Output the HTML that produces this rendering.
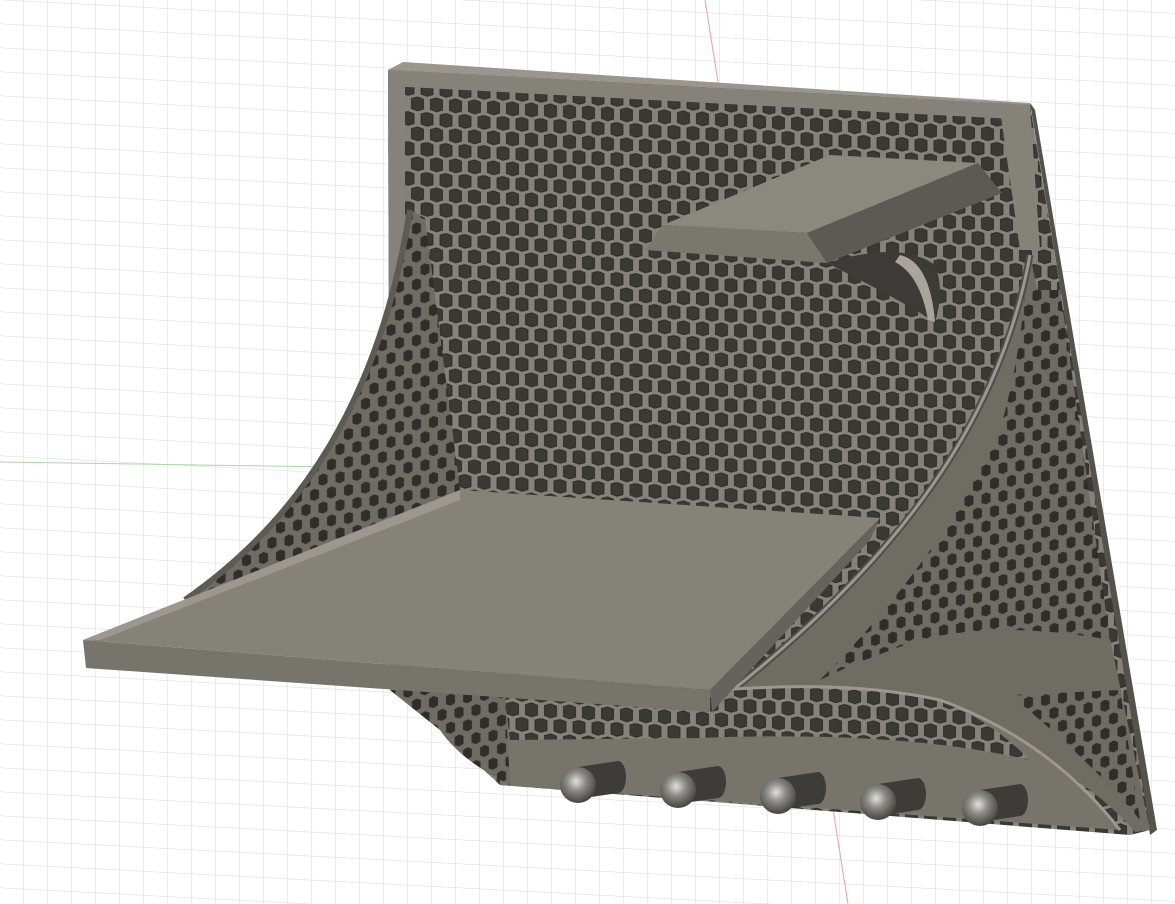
<!DOCTYPE html>
<html><head><style>html,body{margin:0;padding:0;background:#fff;width:1175px;height:904px;overflow:hidden}</style></head>
<body>
<svg width="1175" height="904" viewBox="0 0 1175 904" xmlns="http://www.w3.org/2000/svg">
<defs>
<pattern id="grid" width="24" height="24" patternUnits="userSpaceOnUse" patternTransform="skewY(3)">
<path d="M24 0V24H0" fill="none" stroke="#d8d8d8" stroke-width="1"/>
</pattern>
<pattern id="hex" width="19" height="30" patternUnits="userSpaceOnUse" patternTransform="skewY(3)">
<rect width="19" height="30" fill="#85827a"/>
<polygon points="3,2 9,0 15,2 15,12 9,14 3,12" fill="#3a3934" stroke="#25241f" stroke-width="0.8"/>
<polygon points="-6.5,17 -0.5,15 5.5,17 5.5,27 -0.5,29 -6.5,27" fill="#3a3934" stroke="#25241f" stroke-width="0.8"/>
<polygon points="12.5,17 18.5,15 24.5,17 24.5,27 18.5,29 12.5,27" fill="#3a3934" stroke="#25241f" stroke-width="0.8"/>
</pattern>
<pattern id="hexs" width="17" height="28" patternUnits="userSpaceOnUse" patternTransform="skewY(-8)">
<rect width="17" height="28" fill="#6f6c64"/>
<polygon points="4,3 8.5,1 13,3 13,11 8.5,13 4,11" fill="#2f2e2a"/>
<polygon points="-4.5,17 0,15 4.5,17 4.5,25 0,27 -4.5,25" fill="#2f2e2a"/>
<polygon points="12.5,17 17,15 21.5,17 21.5,25 17,27 12.5,25" fill="#2f2e2a"/>
</pattern>
<radialGradient id="peg" cx="0.45" cy="0.4" r="0.6"><stop offset="0" stop-color="#e0e0de"/><stop offset="0.45" stop-color="#8a8984"/><stop offset="1" stop-color="#45443f"/></radialGradient>
</defs>
<rect width="1175" height="904" fill="#fff"/>
<rect width="1175" height="904" fill="url(#grid)"/>
<line x1="705" y1="0" x2="848" y2="904" stroke="#e6a0a0" stroke-width="1"/>
<line x1="0" y1="462" x2="400" y2="468" stroke="#a8d8a8" stroke-width="1"/>
<!-- back panel thickness edge -->
<polygon points="388,70 403,62 1030,103 1035,110" fill="#9a968d"/>
<polygon points="1030,103 1035,110 1157,830 1150,835" fill="#55524c"/>
<!-- back panel -->
<polygon points="388,70 1030,105 1150,830 1130,835 500,785 440,730 390,690" fill="url(#hex)"/>
<!-- solid rims of back panel -->
<polygon points="388,70 1030,105 1030,120 388,86" fill="#85827a"/>
<polygon points="388,70 405,72 405,690 390,690" fill="#85827a"/>
<polygon points="1000,110 1030,105 1040,250 1020,250" fill="#85827a"/>
<!-- right side panel solid -->
<path d="M1030,255 C1000,420 900,560 720,700 L1020,745 Q1100,790 1135,832 L1150,830 Z" fill="#6f6c64"/>
<!-- sparse hex areas on right panel -->
<path d="M1025,290 L1060,290 L1110,640 Q1000,620 920,640 Q860,660 820,680 Q940,560 1000,430 Q1020,360 1025,290 Z" fill="url(#hexs)"/>
<path d="M1010,695 L1120,690 L1140,820 Q1090,760 1010,695 Z" fill="url(#hexs)"/>
<path d="M1030,255 C1000,420 900,560 720,700" fill="none" stroke="#4f4d47" stroke-width="7"/>
<path d="M1030,255 C1000,420 900,560 720,700" fill="none" stroke="#9c9890" stroke-width="3"/>
<!-- bottom back strip -->
<path d="M505,700 L720,690 Q850,680 940,700 Q1050,740 1120,830 L500,785 Z" fill="#77746c"/>
<path d="M505,700 L720,690 Q850,680 940,700 Q990,720 1030,760 Q900,730 700,738 L510,740 Z" fill="url(#hex)"/>
<path d="M720,690 Q850,680 940,700 Q1050,740 1120,830" fill="none" stroke="#9c9890" stroke-width="3"/>
<!-- left side panel -->
<path d="M410,210 L425,218 L460,490 L185,600 C300,520 380,400 410,210 Z" fill="url(#hexs)"/>
<path d="M410,210 C380,400 300,520 185,600" fill="none" stroke="#5e5b54" stroke-width="6"/>
<path d="M390,690 L505,690 L510,785 Q460,760 440,730 Z" fill="url(#hexs)"/>
<!-- top small shelf -->
<path d="M827,263 Q900,240 935,265 Q945,290 935,322 Q900,300 827,263 Z" fill="#3c3b37"/>
<path d="M900,255 Q930,262 935,322 L928,320 Q920,275 895,262 Z" fill="#a9a59c"/>
<polygon points="663,225 830,155 978,163 807,233" fill="#8b887f"/>
<polygon points="663,225 807,233 827,263 645,250" fill="#7a776f"/>
<polygon points="807,233 978,163 1002,193 827,263" fill="#5d5a53"/>
<!-- shelf -->
<polygon points="83,640 460,490 880,518 710,690" fill="#85827a"/>
<polygon points="83,640 710,690 710,712 86,668" fill="#77746c"/>
<polygon points="710,690 880,518 870,540 712,712" fill="#66635c"/>
<polygon points="100,640 460,500 460,490 83,640" fill="#9c9890"/>
<!-- pegs -->
<g>
<g transform="translate(578,785)"><path d="M0,-18 L40,-24 A8,16 0 0 1 40,8 L0,14 Z" fill="#3d3c38"/><circle r="18" fill="url(#peg)"/></g>
<g transform="translate(678,790)"><path d="M0,-18 L40,-24 A8,16 0 0 1 40,8 L0,14 Z" fill="#3d3c38"/><circle r="18" fill="url(#peg)"/></g>
<g transform="translate(778,796)"><path d="M0,-18 L40,-24 A8,16 0 0 1 40,8 L0,14 Z" fill="#3d3c38"/><circle r="18" fill="url(#peg)"/></g>
<g transform="translate(878,802)"><path d="M0,-18 L40,-24 A8,16 0 0 1 40,8 L0,14 Z" fill="#3d3c38"/><circle r="18" fill="url(#peg)"/></g>
<g transform="translate(980,808)"><path d="M0,-18 L40,-24 A8,16 0 0 1 40,8 L0,14 Z" fill="#3d3c38"/><circle r="18" fill="url(#peg)"/></g>
</g>
</svg>
</body></html>
